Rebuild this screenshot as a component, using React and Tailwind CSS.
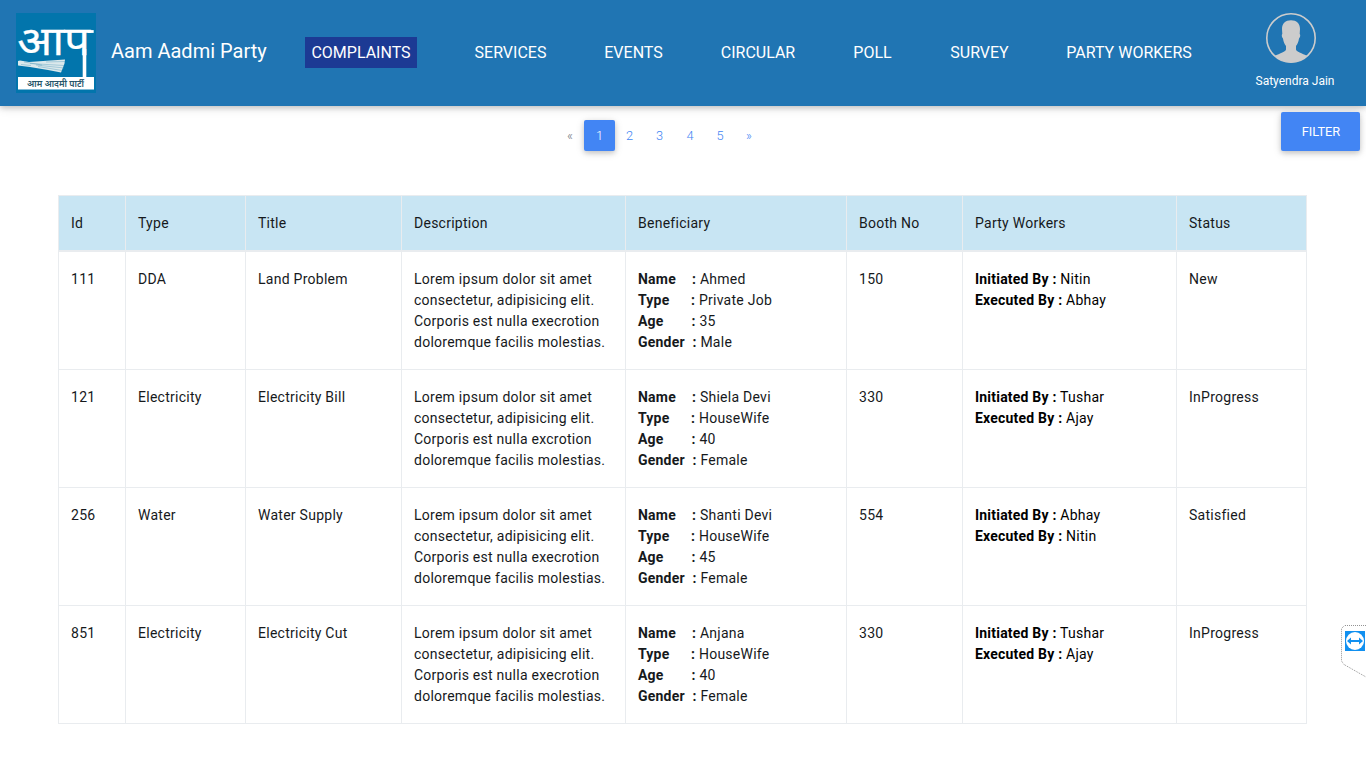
const NAV = [
  { label: 'COMPLAINTS', cls: 'ml-[305px] w-[112px] bg-[#1c3a94]' },
  { label: 'SERVICES', cls: 'ml-[51px] w-[85px]' },
  { label: 'EVENTS', cls: 'ml-[45px] w-[71px]' },
  { label: 'CIRCULAR', cls: 'ml-[46px] w-[86px]' },
  { label: 'POLL', cls: 'ml-[46px] w-[51px]' },
  { label: 'SURVEY', cls: 'ml-[46px] w-[71px]' },
  { label: 'PARTY WORKERS', cls: 'ml-[45px] w-[138px]' },
];

const COLUMNS = [
  ['Id', 'w-[68px] border-l'],
  ['Type', 'w-[120px]'],
  ['Title', 'w-[156px]'],
  ['Description', 'w-[224px]'],
  ['Beneficiary', 'w-[221px]'],
  ['Booth No', 'w-[116px]'],
  ['Party Workers', 'w-[214px]'],
  ['Status', 'w-[130px]'],
];

const ROWS = [
  { id: 111, type: 'DDA', title: 'Land Problem', word: 'execrotion', name: 'Ahmed', job: 'Private Job', age: 35, gender: 'Male', booth: 150, init: 'Nitin', exec: 'Abhay', status: 'New' },
  { id: 121, type: 'Electricity', title: 'Electricity Bill', word: 'excrotion', name: 'Shiela Devi', job: 'HouseWife', age: 40, gender: 'Female', booth: 330, init: 'Tushar', exec: 'Ajay', status: 'InProgress' },
  { id: 256, type: 'Water', title: 'Water Supply', word: 'execrotion', name: 'Shanti Devi', job: 'HouseWife', age: 45, gender: 'Female', booth: 554, init: 'Abhay', exec: 'Nitin', status: 'Satisfied' },
  { id: 851, type: 'Electricity', title: 'Electricity Cut', word: 'execrotion', name: 'Anjana', job: 'HouseWife', age: 40, gender: 'Female', booth: 330, init: 'Tushar', exec: 'Ajay', status: 'InProgress' },
];

function Logo() {
  return (
    <svg className="block size-20" viewBox="0 0 80 80">
      <rect width="80" height="80" fill="#0275ac" />
      <text x="1.200" y="42" fontSize="40" fill="#fff" stroke="#fff" strokeWidth=".3" textLength="73" lengthAdjust="spacingAndGlyphs" fontFamily="'Noto Sans Devanagari', 'Noto Sans', sans-serif">आप</text>
      <path d="M68.500 36V65" stroke="#fff" strokeWidth="3.600" />
      <path d="M72 18.500h5.700" stroke="#fff" strokeWidth="2.800" />
      <path d="M2 48l2-.5 9 1.500 14-1 22-1.500-.5 4-1.500 4-2 5-13-2.500-18-3-12-1.500z" fill="#dce9ec" />
      <path d="M14 50.500l34 2M20 52l28 3M22 53.500l24 4M8 49l18 3M30 49l19-.5M5 51.500l10 1" stroke="#4b98b8" strokeWidth=".4" />
      <rect x="2" y="64" width="76" height="12.500" fill="#fff" />
      <text x="11" y="73.500" fontSize="9" fontWeight="600" fill="#27566a" textLength="57" lengthAdjust="spacingAndGlyphs" fontFamily="'Noto Sans Devanagari', 'Noto Sans', sans-serif">आम आदमी पार्टी</text>
    </svg>
  );
}

function Avatar() {
  return (
    <svg className="block size-[50px]" viewBox="0 0 50 50">
      <circle cx="25" cy="25" r="24.200" fill="none" stroke="#ccc" strokeWidth="1.600" />
      <path d="M25 7.200c5.500 0 9 2.800 9 8.800l-.3 5c.8.500.7 3-.7 4.500-.4 3.500-1.500 5.500-3 7.500v3.500c0 2 6 4 11.500 6.500A24.500 24.500 0 0 1 8.500 43C14 40.500 20 38.500 20 36.500V33c-1.500-2-2.600-4-3-7.500-1.400-1.500-1.500-4-.7-4.500L16 16c0-6 3.500-8.800 9-8.800z" fill="#ccc" />
    </svg>
  );
}

function Remote() {
  return (
    <svg className="absolute top-[625px] left-[1341px] h-[53px] w-[25px]" viewBox="0 0 25 53">
      <path d="M25 .5H3.500L.5 3.500V36L3 39.500 25 52" fill="#fff" stroke="#777" strokeWidth=".8" strokeDasharray="1 1" />
      <rect x="4" y="6" width="20" height="20" fill="#1190f0" />
      <circle cx="14" cy="16" r="9" fill="#fff" />
      <path d="M6 16l4-3.500v2.500h8V12.500l4 3.500-4 3.500V17h-8v2.500z" fill="#1190f0" />
    </svg>
  );
}

function Benef({ row }) {
  const fields = [
    ['Name', row.name, 'w-[54px]'],
    ['Type', row.job, 'w-[53px]'],
    ['Age', row.age, 'w-[53.500px]'],
    ['Gender', row.gender, 'w-[54.500px]'],
  ];
  return fields.map(([label, value, cls]) => (
    <div key={label} className="flex whitespace-pre">
      <b className={`font-bold tracking-[0.21px] ${cls}`}>{label}</b>
      <span><b className="font-bold tracking-[0.21px]">:</b> {value}</span>
    </div>
  ));
}

export default function App() {
  return (
    <div className="relative flex h-[768px] w-[1366px] flex-col overflow-hidden bg-white font-['Roboto',sans-serif] text-[#212529]">
      <header className="flex h-[106px] shrink-0 bg-[#2075b3] text-white shadow-[0_2px_5px_0_rgba(0,0,0,0.16),0_2px_10px_0_rgba(0,0,0,0.12)]">
        <div className="-mr-[305px] flex w-[305px] shrink-0 pt-[13px] pl-4">
          <Logo />
          <span className="ml-[15px] pt-[23px] text-[20px] leading-[30px]">Aam Aadmi Party</span>
        </div>
        <nav className="flex pt-[37px]">
          {NAV.map((n) => (
            <a key={n.label} className={`h-[31px] shrink-0 text-center text-[16px] leading-[31px] whitespace-nowrap ${n.cls}`}>{n.label}</a>
          ))}
        </nav>
        <div className="ml-auto flex w-[150px] flex-col items-center pt-[13px]">
          <Avatar />
          <span className="mt-2 ml-2 text-[12px] leading-5">Satyendra Jain</span>
        </div>
      </header>

      <div className="flex h-[89px] shrink-0">
        <div className="mt-[14px] ml-[556px] flex h-[31px] text-[12.800px] leading-[31px] font-light text-[#4285f4]">
          <span className="w-7 text-center text-[#6c757d]">«</span>
          <span className="w-[31px] rounded-[2px] bg-[#4285f4] text-center text-white shadow-[0_2px_5px_0_rgba(0,0,0,0.16),0_2px_10px_0_rgba(0,0,0,0.12)]">1</span>
          <span className="w-[29px] text-center">2</span>
          <span className="w-[31px] text-center">3</span>
          <span className="w-[30px] text-center">4</span>
          <span className="w-[30px] text-center">5</span>
          <span className="w-7 text-center">»</span>
        </div>
        <button className="mt-[6px] mr-[6px] ml-auto h-[39px] w-[79px] rounded-[2px] bg-[#4285f4] pl-px text-[12.800px] text-white shadow-[0_2px_5px_0_rgba(0,0,0,0.16),0_2px_10px_0_rgba(0,0,0,0.12)]">FILTER</button>
      </div>

      <table className="ml-[58px] w-[1249px] table-fixed border-separate border-spacing-0 text-left text-[14px] leading-[21px] tracking-[0.26px] text-[#16191c]">
        <thead>
          <tr className="h-[57px]">
            {COLUMNS.map(([label, cls]) => (
              <th key={label} className={`border-t border-r border-b-2 border-[#e9ecef] bg-[#c8e5f3] pl-3 font-normal ${cls}`}>{label}</th>
            ))}
          </tr>
        </thead>
        <tbody className="align-top">
          {ROWS.map((r) => (
            <tr key={r.id} className="h-[118px] [&>td]:border-r [&>td]:border-b [&>td]:border-[#e9ecef] [&>td]:pt-[17px] [&>td]:pl-3">
              <td className="border-l">{r.id}</td>
              <td>{r.type}</td>
              <td>{r.title}</td>
              <td className="whitespace-nowrap">
                Lorem ipsum dolor sit amet<br />consectetur, adipisicing elit.<br />Corporis est nulla {r.word}<br />doloremque facilis molestias.
              </td>
              <td><Benef row={r} /></td>
              <td>{r.booth}</td>
              <td className="text-black"><b className="font-bold tracking-[0.21px]">Initiated By :</b> {r.init}<br /><b className="font-bold tracking-[0.21px]">Executed By :</b> {r.exec}</td>
              <td>{r.status}</td>
            </tr>
          ))}
        </tbody>
      </table>
      <Remote />
    </div>
  );
}
